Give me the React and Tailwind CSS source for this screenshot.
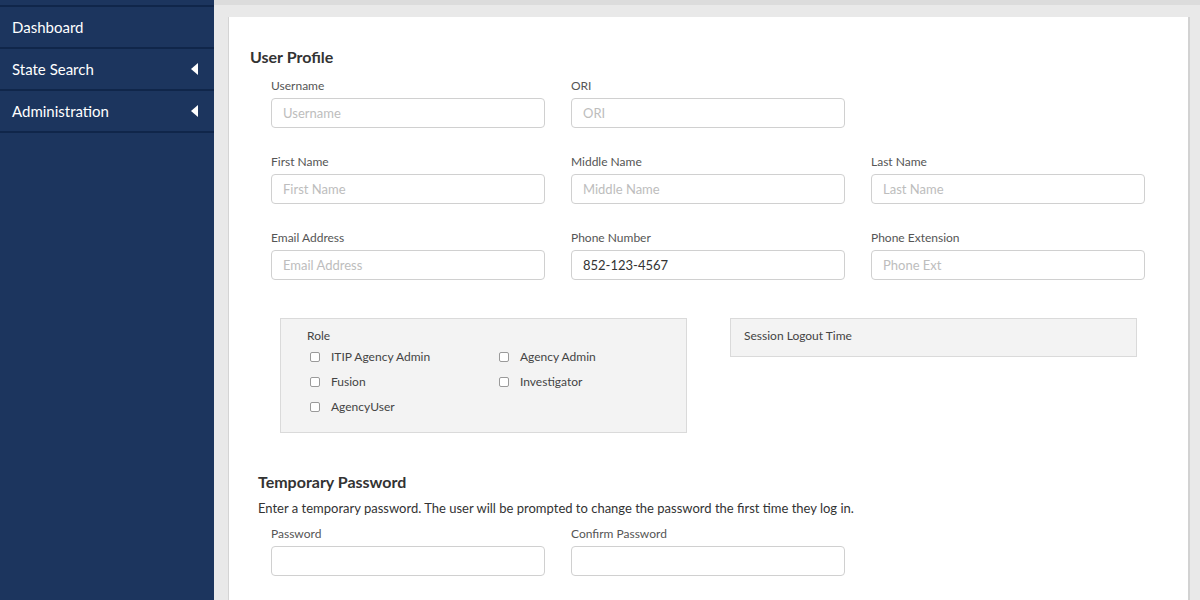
import React from 'react';

const font = { fontFamily: 'Lato, "Open Sans", Arial, sans-serif' };

const Caret = () => (
  <svg width="7" height="12" viewBox="0 0 7 12" className="mr-[16px]">
    <polygon points="7,0 7,12 0,6" fill="#ffffff" />
  </svg>
);

const Field = ({ label, placeholder, value }) => (
  <div className="flex flex-col">
    <label className="text-[12px] leading-[16px] text-[#555] mb-[4px]">{label}</label>
    <input
      className="h-[30px] w-[274px] rounded-[4px] border border-[#d0d0d0] bg-white px-[11px] text-[13px] text-[#333] placeholder:text-[#bdbdbd] outline-none"
      placeholder={placeholder}
      defaultValue={value}
    />
  </div>
);

const Check = ({ label }) => (
  <div className="flex items-center h-[25px]">
    <span className="w-[10px] h-[10px] rounded-[2px] border border-[#9a9a9a] bg-white" />
    <span className="ml-[11px] text-[12px] text-[#444]">{label}</span>
  </div>
);

export default function App() {
  return (
    <div className="flex w-[1200px] h-[600px] overflow-hidden" style={font}>
      {/* Sidebar */}
      <aside className="w-[214px] shrink-0 bg-[#1c355e] text-white text-[15px]">
        <div className="h-[7px] border-b-2 border-[#10264a]" />
        {[
          { name: 'Dashboard' },
          { name: 'State Search', caret: true },
          { name: 'Administration', caret: true },
        ].map((item) => (
          <div
            key={item.name}
            className="h-[42px] flex items-center justify-between pl-[12px] border-b-2 border-[#10264a]"
          >
            <span>{item.name}</span>
            {item.caret && <Caret />}
          </div>
        ))}
      </aside>

      {/* Main */}
      <main className="flex-1 bg-[#e9e9e9] flex flex-col">
        <div className="h-[5px] shrink-0 bg-[#dcdcdc]" />
        <div className="flex-1 pl-[14px] pr-[12px] pt-[12px]">
          <div className="h-[640px] bg-white border-l border-[#d4d4d4] shadow-[2px_0_0_#d2d2d2] pl-[21px] pt-[30px]">
            <h2 className="text-[16px] leading-[20px] font-bold text-[#333]">User Profile</h2>

            <div className="ml-[21px] mt-[11px] grid grid-cols-[274px_274px_274px] gap-x-[26px] gap-y-[26px]">
              <Field label="Username" placeholder="Username" />
              <Field label="ORI" placeholder="ORI" />
              <div />
              <Field label="First Name" placeholder="First Name" />
              <Field label="Middle Name" placeholder="Middle Name" />
              <Field label="Last Name" placeholder="Last Name" />
              <Field label="Email Address" placeholder="Email Address" />
              <Field label="Phone Number" value="852-123-4567" />
              <Field label="Phone Extension" placeholder="Phone Ext" />
            </div>

            <div className="ml-[30px] mt-[38px] flex items-start gap-[43px]">
              <div className="w-[407px] h-[115px] bg-[#f3f3f3] border border-[#dadada] pl-[26px] pt-[9px]">
                <div className="text-[12px] leading-[16px] text-[#444]">Role</div>
                <div className="pl-[3px] grid grid-cols-[189px_1fr]">
                  <Check label="ITIP Agency Admin" />
                  <Check label="Agency Admin" />
                  <Check label="Fusion" />
                  <Check label="Investigator" />
                  <Check label="AgencyUser" />
                </div>
              </div>
              <div className="w-[407px] h-[39px] bg-[#f3f3f3] border border-[#dadada] pl-[13px] pt-[9px] text-[12px] leading-[16px] text-[#444]">
                Session Logout Time
              </div>
            </div>

            <div className="ml-[8px] mt-[39px]">
              <h2 className="text-[16px] leading-[20px] font-bold text-[#333]">Temporary Password</h2>
              <p className="mt-[8px] text-[13px] leading-[16px] text-[#333]">
                Enter a temporary password. The user will be prompted to change the password the first time they log in.
              </p>
            </div>

            <div className="ml-[21px] mt-[10px] grid grid-cols-[274px_274px] gap-x-[26px]">
              <Field label="Password" />
              <Field label="Confirm Password" />
            </div>
          </div>
        </div>
      </main>
    </div>
  );
}
